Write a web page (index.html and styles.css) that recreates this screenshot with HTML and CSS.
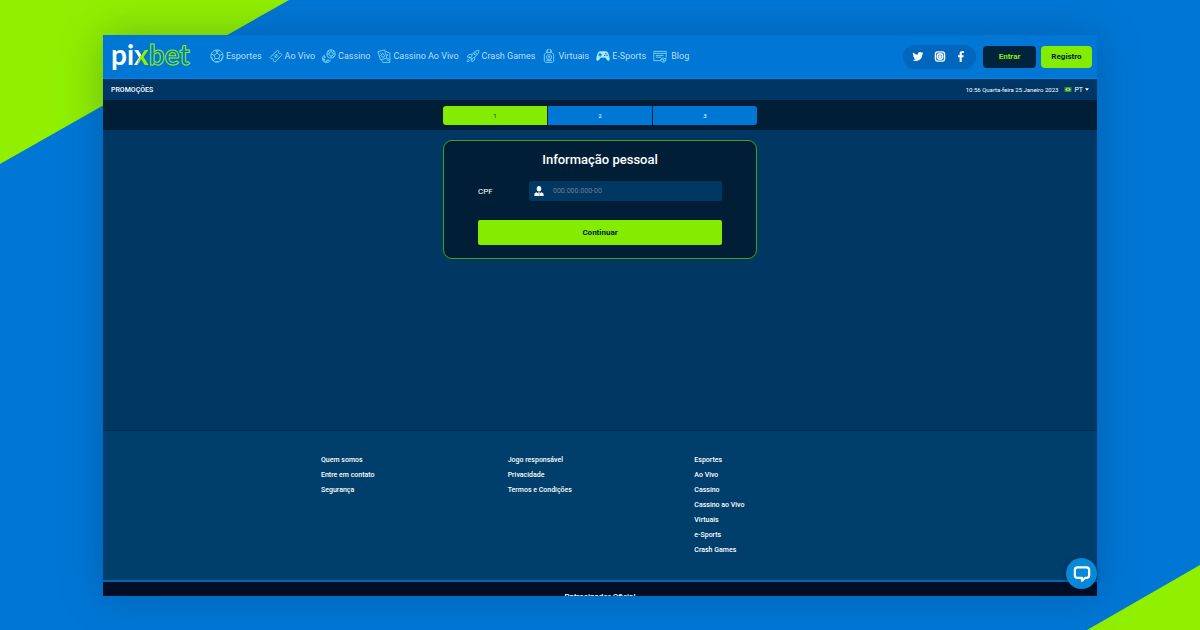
FILE: index.html
```html
<!DOCTYPE html>
<html lang="pt-BR">
<head>
<meta charset="utf-8">
<meta name="viewport" content="width=device-width, initial-scale=1">
<title>Pixbet</title>
<link rel="stylesheet" href="styles.css">
</head>
<body>
<div class="corner corner-top"></div>
<div class="corner corner-bottom"></div>
<div class="window">
  <header class="header">
    <a class="logo" href="#" aria-label="pixbet"><span class="logo-solid">pi</span><span class="logo-x">x</span><span class="logo-line">bet</span></a>
    <nav class="nav">
      <a class="nav-item" href="#"><svg class="nav-icon" viewBox="0 0 24 24"><circle cx="12" cy="12" r="10.5"/><path d="M12 7l5 3.600-2 5.900H9l-2-5.900zM12 7V2M17 10.600l5-2M15 16.500l3.500 4M9 16.500l-3.500 4M7 10.600l-5-2M8 2.500l4 2.500 4-2.500M1.500 13.500l3 2.500-.5 3.500M22.500 13.500l-3 2.500.5 3.500M9 22.500l3-1.500 3 1.500"/></svg>Esportes</a>
      <a class="nav-item" href="#"><svg class="nav-icon" viewBox="0 0 24 24"><path d="M14.500 2l2.300 2.300a2 2 0 0 0 2.900 2.900L22.500 10 10 22.500l-2.600-2.600a2 2 0 0 0-2.800-2.800L2 14.500zM8.500 11l5 5M11 8.500l5 5M10 15l4-6"/></svg>Ao Vivo</a>
      <a class="nav-item" href="#"><svg class="nav-icon" viewBox="0 0 24 24"><circle cx="15.500" cy="8.500" r="7"/><circle cx="15.500" cy="8.500" r="3.500"/><path d="M15.500 1.500V5M15.500 12v3.500M8.500 8.500H12M19 8.500h3.500M10.500 3.500L13 6M18 11l2.500 2.500M20.500 3.500L18 6M5 10a7 7 0 1 0 9.500 8.500M5.500 13.500a4 4 0 1 0 5 5M2 18h3.500M8 22.500V19M3.500 12l3 3M12.500 21l-2.500-3"/></svg>Cassino</a>
      <a class="nav-item" href="#"><svg class="nav-icon" viewBox="0 0 24 24"><path d="M1.500 4.500L13 1.500l4 14-11 3zM15 4l7 3v16H10l-2-4M5 6.500l1.500 1M9.500 7l3.500 4.500-1.500 3-5-3zM18 9v3M19 16l-2 2 2 2 2-2z"/></svg>Cassino Ao Vivo</a>
      <a class="nav-item" href="#"><svg class="nav-icon" viewBox="0 0 24 24"><path d="M9 15c1-6 5-12 13-13 0 8-6 12-13 15l-3-3zM10 9L5 9.500 2 14l5 0M15 14l-.5 5L10 22v-5M6 16c-2 1-3 3-4 6 3-1 5-2 6-4"/><circle cx="16" cy="8" r="2"/></svg>Crash Games</a>
      <a class="nav-item" href="#"><svg class="nav-icon" viewBox="0 0 24 24"><path d="M8 6V4a4 4 0 0 1 8 0v2M4 9l4-3h8l4 3v12l-2 2H6l-2-2zM9 2v5M15 2v5M7 20h10"/><circle cx="12" cy="14" r="4.500"/><circle cx="12" cy="14" r="1.500"/></svg>Virtuais</a>
      <a class="nav-item" href="#"><svg class="nav-icon nav-icon-solid" viewBox="0 0 24 24"><path fill-rule="evenodd" d="M7 4h10c4 0 6 8 6.500 13 .2 4-3 4-5 1.500L16 15H8l-2.500 3.500C3.500 21 .3 21 .5 17 1 12 3 4 7 4zm-1 3v2H4v2h2v2h2v-2h2V9H8V7zm10 0v2h2V7zm-2 3v2h2v-2zm4 0v2h2v-2z"/></svg>E-Sports</a>
      <a class="nav-item nav-item-wide" href="#"><svg class="nav-icon" viewBox="0 0 24 24"><path d="M14 20H1.500V4h21v10M2 7.500h20M5 11h13M5 14h9M13 18c1-3 5-4 8-1l1-2v5h-5l2-1c-2-2-4-1-6-1zM21 21c-2 3-6 2-7-1"/></svg>Blog</a>
    </nav>
    <div class="social">
      <a href="#" aria-label="Twitter"><svg class="social-icon" viewBox="0 0 24 24"><path d="M23.900 4.600a10 10 0 0 1-2.800.8 5 5 0 0 0 2.100-2.700 10 10 0 0 1-3.100 1.200A4.900 4.900 0 0 0 11.700 8.400 14 14 0 0 1 1.600 3.200a4.900 4.900 0 0 0 1.500 6.600 5 5 0 0 1-2.200-.6 4.900 4.900 0 0 0 3.900 4.900 5 5 0 0 1-2.200.1 4.900 4.900 0 0 0 4.600 3.400A10 10 0 0 1 0 19.500a14 14 0 0 0 21.500-12.400 10 10 0 0 0 2.400-2.500z"/></svg></a>
      <a href="#" aria-label="Instagram"><svg class="social-icon social-line" viewBox="0 0 24 24"><rect x="2" y="2" width="20" height="20" rx="5"/><circle cx="12" cy="12" r="6"/><circle cx="12" cy="12" r="2"/><path d="M18 5.500h.5"/></svg></a>
      <a href="#" aria-label="Facebook"><svg class="social-icon" viewBox="0 0 24 24"><path d="M9 24V13.500H5.500V9H9V6c0-4 2.400-6 5.800-6 1.600 0 3 .1 3.400.2v4h-2.300c-1.900 0-2.300.9-2.300 2.200V9h4.300l-.6 4.500h-3.700V24z"/></svg></a>
    </div>
    <button class="btn btn-login" type="button">Entrar</button>
    <button class="btn btn-register" type="button">Registro</button>
  </header>
  <div class="subbar">
    <a class="promo" href="#">PROMOÇÕES</a>
    <time class="clock">10:56 Quarta-feira 25 Janeiro 2023</time>
    <button class="lang" type="button"><svg class="flag" viewBox="0 0 14 10"><path fill="#159447" d="M0 0h14v10H0z"/><path fill="#ffe14a" d="M7 1l6 4-6 4-6-4z"/><circle cx="7" cy="5" r="2" fill="#24539b"/></svg>PT<svg class="caret" viewBox="0 0 10 6"><path fill="#fff" d="M0 0h10L5 6z"/></svg></button>
  </div>
  <div class="steps-bar">
    <ol class="steps">
      <li class="step step-active">1</li>
      <li class="step">2</li>
      <li class="step">3</li>
    </ol>
  </div>
  <main class="main">
    <form class="card">
      <h1 class="card-title">Informação pessoal</h1>
      <div class="field">
        <label class="field-label" for="cpf">CPF</label>
        <div class="field-box">
          <svg class="user-icon" viewBox="0 0 24 24"><ellipse cx="12" cy="6.500" rx="5.500" ry="6.500"/><path d="M1 24v-4c0-3 3-4 6-5l4 5-1 4zM23 24v-4c0-3-3-4-6-5l-4 5 1 4zM10.500 15h3l1 9h-5z"/></svg>
          <input class="field-input" id="cpf" type="text" placeholder="000.000.000-00">
        </div>
      </div>
      <button class="submit" type="submit">Continuar</button>
    </form>
  </main>
  <footer class="footer">
    <div class="footer-links">
      <ul class="links">
        <li><a href="#">Quem somos</a></li>
        <li><a href="#">Entre em contato</a></li>
        <li><a href="#">Segurança</a></li>
      </ul>
      <ul class="links">
        <li><a href="#">Jogo responsável</a></li>
        <li><a href="#">Privacidade</a></li>
        <li><a href="#">Termos e Condições</a></li>
      </ul>
      <ul class="links">
        <li><a href="#">Esportes</a></li>
        <li><a href="#">Ao Vivo</a></li>
        <li><a href="#">Cassino</a></li>
        <li><a href="#">Cassino ao Vivo</a></li>
        <li><a href="#">Virtuais</a></li>
        <li><a href="#">e-Sports</a></li>
        <li><a href="#">Crash Games</a></li>
      </ul>
    </div>
  </footer>
  <div class="sponsor">Patrocinador Oficial</div>
  <button class="chat" type="button" aria-label="Chat"><svg class="chat-icon" viewBox="0 0 24 24"><path d="M6 3h12q3.500 0 3.500 3.500v7q0 3.500-3.500 3.500h-1.500L12 21v-4H6q-3.500 0-3.500-3.500v-7Q2.500 3 6 3z"/></svg></button>
</div>
</body>
</html>
```
FILE: styles.css
```css
* {
  box-sizing: border-box;
}

body {
  position: relative;
  margin: 0;
  height: 100vh;
  padding: 35px 103px 34px;
  overflow: hidden;
  background: #0077d5;
  color: #fff;
  font-family: Roboto, "Liberation Sans", sans-serif;
}

a {
  color: inherit;
  text-decoration: none;
}

button,
input {
  border: 0;
  padding: 0;
  font-family: inherit;
}

ul,
ol {
  margin: 0;
  padding: 0;
  list-style: none;
}

.corner {
  position: absolute;
  background: #90f000;
}

.corner-top {
  top: 0;
  left: 0;
  width: 289px;
  height: 164px;
  clip-path: polygon(0 0, 100% 0, 0 100%);
}

.corner-bottom {
  right: 0;
  bottom: 0;
  width: 113px;
  height: 65px;
  clip-path: polygon(100% 0, 100% 100%, 0 100%);
}

.window {
  position: relative;
  display: flex;
  flex-direction: column;
  height: 100%;
  background: #003863;
  box-shadow: 0 0 40px rgba(0, 40, 80, 0.28);
}

.header {
  display: flex;
  flex: none;
  align-items: center;
  height: 44px;
  padding: 0 5px 0 8px;
  border-bottom: 1px solid #0a83e6;
  background: #0077d5;
}

.logo {
  flex: none;
  width: 99px;
  padding-bottom: 6px;
  font-family: Lato, sans-serif;
  font-size: 28px;
  font-weight: 700;
  line-height: 34px;
}

.logo-x {
  background: linear-gradient(115deg, #fff 50%, #90f000 50%);
  background-clip: text;
  color: transparent;
}

.logo-line {
  color: #0077d5;
  -webkit-text-stroke: 1px #90f000;
}

.nav {
  display: flex;
  flex: 1;
  gap: 7px;
  padding-bottom: 2px;
}

.nav-item {
  display: flex;
  align-items: center;
  gap: 2px;
  color: #bcdcf8;
  font-size: 9px;
  line-height: 14px;
  white-space: nowrap;
}

.nav-item-wide {
  gap: 4px;
}

.nav-icon {
  width: 14px;
  height: 14px;
  fill: none;
  stroke: #80d8fa;
  stroke-width: 1.5;
}

.nav-icon-solid {
  fill: #a5e8ff;
  stroke: none;
}

.social {
  display: flex;
  align-items: center;
  justify-content: space-between;
  width: 73px;
  height: 24px;
  margin-right: 7px;
  padding: 0 9px;
  border-radius: 12px;
  background: #0067bd;
}

.social a {
  display: flex;
}

.social-icon {
  width: 12px;
  height: 11px;
  fill: #fff;
}

.social-line {
  fill: none;
  stroke: #fff;
  stroke-width: 3;
}

.btn {
  width: 53px;
  height: 22px;
  border-radius: 4px;
  font-size: 8px;
  font-weight: 700;
}

.btn-login {
  margin-right: 5px;
  background: #00233e;
  color: #84ec00;
}

.btn-register {
  width: 51px;
  background: #84ec00;
  color: #00233e;
}

.subbar {
  display: flex;
  flex: none;
  align-items: center;
  height: 21px;
  padding: 0 8px;
  background: #003664;
}

.promo {
  flex: 1;
  font-size: 7px;
  font-weight: 500;
}

.clock {
  margin-right: 6px;
  font-size: 6px;
}

.lang {
  display: flex;
  align-items: center;
  gap: 2px;
  background: none;
  color: #fff;
  font-size: 7px;
}

.flag {
  width: 8px;
  height: 5px;
}

.caret {
  width: 4px;
  height: 3px;
}

.steps-bar {
  flex: none;
  padding: 6px 0 5px;
  background: #001f37;
}

.steps {
  display: flex;
  gap: 1px;
  width: 314px;
  height: 19px;
  margin: 0 auto;
  overflow: hidden;
  border-radius: 3px;
}

.step {
  display: flex;
  flex: 1;
  align-items: center;
  justify-content: center;
  background: #0077d5;
  font-size: 6px;
  line-height: 8px;
}

.step-active {
  background: #84ec00;
  color: #00233e;
}

.main {
  flex: 1;
  padding-top: 10px;
}

.card {
  width: 314px;
  margin: 0 auto;
  padding: 11px 34px 13px;
  border: 1px solid #4d9b1d;
  border-radius: 9px;
  background: #001f37;
}

.card-title {
  margin: 0 0 13px;
  font-size: 13px;
  font-weight: 500;
  line-height: 16px;
  text-align: center;
}

.field {
  display: flex;
  align-items: center;
  margin-bottom: 19px;
}

.field-label {
  width: 51px;
  font-size: 8px;
}

.field-box {
  display: flex;
  flex: 1;
  align-items: center;
  height: 20px;
  padding-left: 5px;
  border-radius: 2px;
  background: #003863;
}

.user-icon {
  width: 10px;
  height: 12px;
  fill: #fff;
}

.field-input {
  flex: 1;
  min-width: 0;
  margin-left: 5px;
  padding-left: 3px;
  border-left: 1px solid #0c3150;
  background: none;
  color: #fff;
  font-size: 7px;
}

.field-input::placeholder {
  color: #6b7f8e;
}

.submit {
  width: 100%;
  height: 25px;
  border-radius: 2px;
  background: #84ec00;
  color: #00233e;
  font-size: 8px;
  font-weight: 700;
}

.footer {
  flex: none;
  height: 152px;
  padding-top: 22px;
  border-top: 1px solid #002a52;
  border-bottom: 2px solid #0068b0;
  background: #003e6b;
}

.footer-links {
  display: grid;
  grid-template-columns: repeat(3, 1fr);
  width: 560px;
  margin: 0 auto;
}

.links {
  display: grid;
  align-content: start;
  gap: 1px;
  padding-left: 1px;
  font-size: 7px;
  font-weight: 500;
  line-height: 14px;
}

.sponsor {
  flex: none;
  height: 14px;
  padding-top: 9px;
  overflow: hidden;
  background: #000f25;
  font-size: 8px;
  font-weight: 500;
  line-height: 12px;
  text-align: center;
}

.chat {
  position: absolute;
  right: 0;
  bottom: 7px;
  display: flex;
  align-items: center;
  justify-content: center;
  width: 31px;
  height: 31px;
  border-radius: 50%;
  background: #0788d8;
  box-shadow: 0 1px 4px rgba(0, 20, 50, 0.5);
}

.chat-icon {
  width: 18px;
  height: 18px;
  fill: none;
  stroke: #fff;
  stroke-width: 3;
  stroke-linejoin: round;
}
```
